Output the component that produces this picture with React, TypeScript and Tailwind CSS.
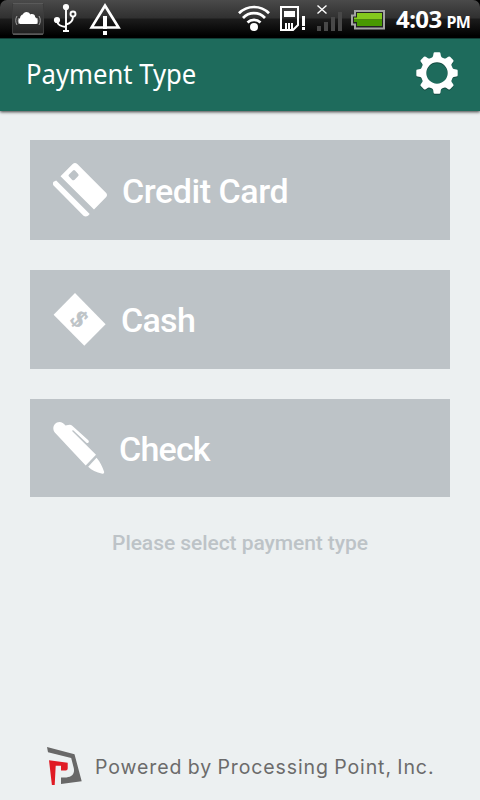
import React from 'react';

const StatusBar = () => {
  return (
    <div className="h-[38px] w-full bg-black">
      <div className="flex h-[38px] w-full items-start rounded-t-[7px] bg-[linear-gradient(#4a4a4a_0px,#303030_18px,#1c1c1c_19px,#000_36px)]">
        <svg width="160" height="38" viewBox="0 0 160 38" fill="none">
          <defs>
            <linearGradient id="tile" x1="0" y1="0" x2="0" y2="1">
              <stop offset="0" stopColor="#4c4c4c" />
              <stop offset="1" stopColor="#1e1e1e" />
            </linearGradient>
          </defs>
          <rect x="12.5" y="3.5" width="31" height="31" rx="1.5" fill="url(#tile)" stroke="#3c3c3c" />
          <path d="M13 34h30" stroke="#777" />
          <path d="M13 3.5h30" stroke="#5a5a5a" />
          <path d="M20 24c-2-1-2.500-4.500 0-6 .3-2.500 1.800-3.300 2.800-3.500 1-3 5.800-3.500 7.400 0 2.400-1.200 5 .2 5 2.700 2.500.8 3.600 4.800 1.500 6.800z" fill="#fff" />
          <path d="M17 16c-1.700 2.500-1.700 6.500 0 9M19 18c-1 1.500-1 4 0 6M39 16c1.700 2.500 1.700 6.500 0 9M37 18c1 1.500 1 4 0 6" stroke="#bbb" strokeWidth=".8" />
          <g stroke="#fff" strokeWidth="1.900">
            <path d="M66 7v24M66 27c-5-.5-8.500-2-9-6M66 24.500c4-1 7-3 7-8" />
            <circle cx="73" cy="14" r="2.500" />
          </g>
          <circle cx="66" cy="7" r="3.100" fill="#fff" />
          <circle cx="57" cy="20" r="3.100" fill="#fff" />
          <path d="M63 30h6v2h-6z" fill="#fff" />
          <path d="M103 28.800H89.300L105 3l15.900 25.800H107v-2.600h9.200L105 8.200 93.900 26.200h9.100z" fill="#fff" />
          <path d="M103 16h4v13h-4zM103 31h4v4h-4z" fill="#fff" />
        </svg>
        <svg className="ml-auto" width="160" height="38" viewBox="230 0 160 38" fill="none">
          <g stroke="#fff" strokeWidth="2.700">
            <path d="M239 13.300a21 21 0 0 1 30 0" />
            <path d="M243 18a15 15 0 0 1 22 0" />
            <path d="M247.500 22.500a9.500 9.500 0 0 1 13 0" />
          </g>
          <circle cx="254" cy="27" r="4" fill="#fff" />
          <path d="M281 7h17v18l-5 5h-12z" stroke="#fff" strokeWidth="2" />
          <path d="M284 11h11v6h-11zM285 23h2v6h-2zM288 23h2v6h-2zM291 23h2v6h-2z" fill="#fff" />
          <path d="M302 16h3v10h-3zM302 27h3v3h-3z" fill="#fff" />
          <path d="M317.500 5.500l9 8M326.500 5.500l-9 8" stroke="#fff" strokeWidth="1.400" />
          <path d="M317 26h4v5h-4zM324 22h4v9h-4zM331 17h4v14h-4zM338 12h4v19h-4z" fill="#484848" />
          <path d="M355 11h29v17.500h-29v-4h-3v-9h3z" fill="#222" stroke="#a3a3a3" strokeWidth="2" />
          <path d="M357 13h25v6.500h-28V17.500h3z" fill="#84c81e" />
          <path d="M354 19.500h28V26h-25v-4h-3z" fill="#489800" />
        </svg>
        <div className="flex w-[90px] items-baseline pl-[6px] pt-[3px] font-['Noto_Sans'] font-bold leading-[32px] text-white">
          <span className="text-[24px] tracking-[-0.6px]">4:03</span>
          <span className="ml-[5px] text-[16px] tracking-[-0.6px]">PM</span>
        </div>
      </div>
    </div>
  );
};

const GearIcon = () => {
  return (
    <svg width="42" height="43" viewBox="-21 -21 42 43">
      {['#144a40', '#ffffff'].map((color, i) => (
        <g key={color} fill={color} transform={i === 0 ? 'translate(0 1)' : undefined}>
          <path fillRule="evenodd" d="M0-16.300A16.300 16.300 0 1 1 0 16.300 16.300 16.300 0 1 1 0-16.300ZM0-10.700A10.700 10.700 0 1 0 0 10.700 10.700 10.700 0 1 0 0-10.700Z" />
          {[0, 45, 90, 135, 180, 225, 270, 315].map((angle) => (
            <path key={angle} transform={`rotate(${angle})`} d="M-5.200-14.500Q-3.600-16.500-3.500-19.400q.1-1.300 1.300-1.300h4.400q1.200 0 1.300 1.300Q3.600-16.500 5.200-14.500z" />
          ))}
        </g>
      ))}
    </svg>
  );
};

const Header = () => {
  return (
    <header className="relative flex h-[73px] items-center justify-between border-t border-[#123f38] bg-[#1e6b5c] pl-[26px] pr-[22px] shadow-[0_1px_3px_rgba(0,0,0,0.75)]">
      <h1 className="-mt-[4px] origin-left scale-x-[0.916] font-['Noto_Sans'] text-[28px] leading-[36px] text-white">Payment Type</h1>
      <button className="-mt-[4px]">
        <GearIcon />
      </button>
    </header>
  );
};

const CardIcon = () => {
  return (
    <svg width="54" height="54" viewBox="0 0 54 54" fill="#fff">
      <path
        fillRule="evenodd"
        d="M7.500 13.300L19.700 1.100q2.300-2 4.600 0L53.200 30q1.600 2 0 4L41 46.500zM20 7.500l-4 4q-.9 1 0 2l3 3.200q1.300 1.200 2.600 0l3.400-3.400q1.200-1.300 0-2.600l-3-3.200q-1-.9-2 0z"
      />
      <path d="M3.200 17.600L36.700 51.100 35 52.700q-2.400 1.600-4.500 0L.6 22.600q-1.400-2.200 0-3.900z" />
    </svg>
  );
};

const CashIcon = () => {
  return (
    <svg width="53" height="53" viewBox="0 0 53 53">
      <path d="M22 0l30.600 31.300-21.300 21.400L.6 21.700z" fill="#fff" />
      <text
        x="0"
        y="8"
        textAnchor="middle"
        transform="translate(26.500 26.200) rotate(45)"
        className="font-['Liberation_Serif'] text-[24px] font-bold"
        fill="#bdc3c7"
        stroke="#bdc3c7"
        strokeWidth=".7"
      >
        $
      </text>
    </svg>
  );
};

const PenIcon = () => {
  return (
    <svg width="52" height="52" viewBox="0 0 52 52" fill="#fff">
      <path d="M1.800 10.500C-1.500 6.500 1 0 6.500 0 9 0 10.500 1.500 12.500 3.500L15 3q2.500-1 4.500 1L35.300 18.200q1 1.200.2 2.300-1 1-2.300 0L20.500 8.500q-1.500-.7-1.200.8L43 32.800 32.700 43.500z" />
      <path d="M43.500 35.700q4.500 5 7.700 14.200.2 2-1.800 1.800-9.500-1.900-14.200-6.900z" />
    </svg>
  );
};

const Logo = () => {
  return (
    <svg width="36" height="39" viewBox="0 0 36 39">
      <path d="M0 0l27.500 7.300 7.200 27L14 37v-6.600h5.500c6-.2 8.500-4.500 7.200-9.600L24.200 11 1 5.200z" fill="#686868" />
      <path d="M2 13.300l18.700 2.500v5.800q0 1.900-2 1.900h-4.700v-4.700H8.700L7.700 38H4.900z" fill="#e01b24" />
    </svg>
  );
};

const App = () => {
  return (
    <div className="flex h-[800px] w-[480px] flex-col overflow-hidden bg-[#ecf0f1]">
      <StatusBar />
      <Header />
      <main className="flex flex-col px-[30px] pt-[29px] font-[Roboto] font-medium">
        <button className="flex h-[100px] items-center bg-[#bdc3c7] pl-[23px] text-[34px] text-white">
          <CardIcon />
          <span className="ml-[15px] mt-[2px] tracking-[-0.45px]">Credit Card</span>
        </button>
        <button className="mt-[30px] flex h-[99px] items-center bg-[#bdc3c7] pl-[23px] text-[34px] text-white">
          <CashIcon />
          <span className="ml-[15px] mt-[2px] tracking-[-0.7px]">Cash</span>
        </button>
        <button className="mt-[30px] flex h-[98px] items-center bg-[#bdc3c7] pl-[23px] text-[34px] text-white">
          <PenIcon />
          <span className="ml-[14px] mt-[2px] tracking-[-0.8px]">Check</span>
        </button>
        <p className="mt-[30px] text-center text-[21px] leading-[32px] tracking-[-0.06px] text-[#bdc3c7]">Please select payment type</p>
      </main>
      <footer className="mt-auto flex items-start pb-[14px] pl-[47px]">
        <Logo />
        <span className="ml-[12px] mt-[6px] whitespace-nowrap font-[Inter] text-[19.5px] leading-[28px] tracking-[0.9px] [word-spacing:-1px] text-[#6b6b6b]">
          Powered by Processing Point, Inc.
        </span>
      </footer>
    </div>
  );
};

export default App;
